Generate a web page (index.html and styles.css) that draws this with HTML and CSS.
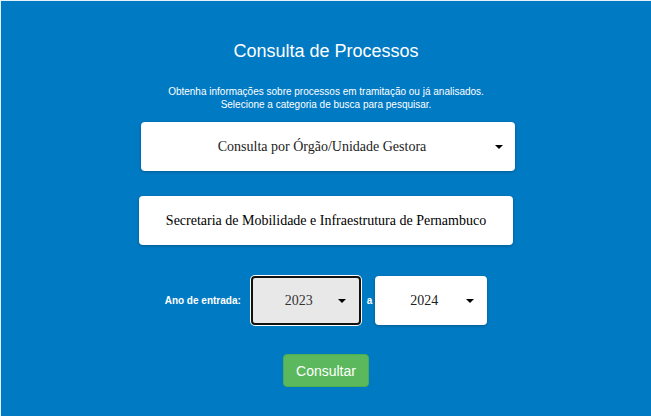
FILE: index.html
```html
<!DOCTYPE html>
<html lang="pt-BR">
<head>
<meta charset="utf-8">
<title>Consulta de Processos</title>
<link rel="stylesheet" href="styles.css">
</head>
<body>
<main class="page">
  <h1 class="title">Consulta de Processos</h1>
  <p class="subtitle">Obtenha informações sobre processos em tramitação ou já analisados.<br>Selecione a categoria de busca para pesquisar.</p>
  <div class="select select-main">
    <span class="select-text">Consulta por Órgão/Unidade Gestora</span>
    <span class="caret"></span>
  </div>
  <div class="field">Secretaria de Mobilidade e Infraestrutura de Pernambuco</div>
  <div class="year-row">
    <span class="label label-year">Ano de entrada:</span>
    <div class="select select-year year-from focused">
      <span class="select-text">2023</span>
      <span class="caret"></span>
    </div>
    <span class="label label-a">a</span>
    <div class="select select-year year-to">
      <span class="select-text">2024</span>
      <span class="caret"></span>
    </div>
  </div>
  <button class="btn">Consultar</button>
</main>
</body>
</html>
```

FILE: styles.css
```css
html, body {
  margin: 0;
  padding: 0;
  height: 100%;
}
body {
  background: #007ac3;
  font-family: "Liberation Sans", Arial, sans-serif;
  color: #fff;
  border-top: 1px solid #e6f2fa;
  border-left: 1px solid #e6f2fa;
  box-sizing: border-box;
}
.page {
  display: flex;
  flex-direction: column;
  align-items: center;
  padding-top: 38px;
}
.title {
  margin: 0;
  font-size: 18px;
  font-weight: normal;
  line-height: 24px;
}
.subtitle {
  margin: 22px 0 0;
  font-size: 10px;
  line-height: 13px;
  text-align: center;
  font-weight: normal;
}
.select {
  position: relative;
  display: flex;
  align-items: center;
  justify-content: center;
  background: #fff;
  border-radius: 4px;
  box-shadow: 0 1px 3px rgba(0, 0, 0, 0.25);
  font-family: "Liberation Serif", "Times New Roman", serif;
  font-size: 14px;
  color: #222;
  box-sizing: border-box;
}
.select-main {
  margin-top: 11px;
  margin-left: 4px;
  width: 374px;
  height: 49px;
}
.caret {
  position: absolute;
  right: 12px;
  top: 50%;
  margin-top: -2px;
  width: 0;
  height: 0;
  border-left: 4px solid transparent;
  border-right: 4px solid transparent;
  border-top: 4px solid #000;
}
.select-main .select-text {
  margin-right: 12px;
}
.field {
  margin-top: 25px;
  width: 374px;
  height: 49px;
  display: flex;
  align-items: center;
  justify-content: center;
  background: #fff;
  border-radius: 4px;
  box-shadow: 0 1px 3px rgba(0, 0, 0, 0.25);
  font-family: "Liberation Serif", "Times New Roman", serif;
  font-size: 14px;
  color: #000;
}
.year-row {
  margin-top: 31px;
  display: flex;
  align-items: center;
}
.label {
  font-size: 10px;
  font-weight: bold;
}
.label-year {
  margin-right: 10px;
}
.label-a {
  margin: 0 3px 0 6px;
}
.select-year {
  height: 49px;
  font-size: 14px;
}
.year-from {
  width: 110px;
}
.year-to {
  width: 112px;
}
.select-year .select-text {
  margin-right: 14px;
}
.select-year .caret {
  right: 13px;
}
.focused {
  background: #e8e8e8;
  border: 2px solid #111;
  box-shadow: 0 0 0 1px #fff;
  color: #333;
}
.btn {
  margin-top: 29px;
  background: #5cb85c;
  border: 1px solid #4cae4c;
  border-radius: 4px;
  color: #fff;
  font-family: "Liberation Sans", Arial, sans-serif;
  font-size: 14px;
  width: 86px;
  height: 33px;
  padding: 0;
  cursor: pointer;
}
```
